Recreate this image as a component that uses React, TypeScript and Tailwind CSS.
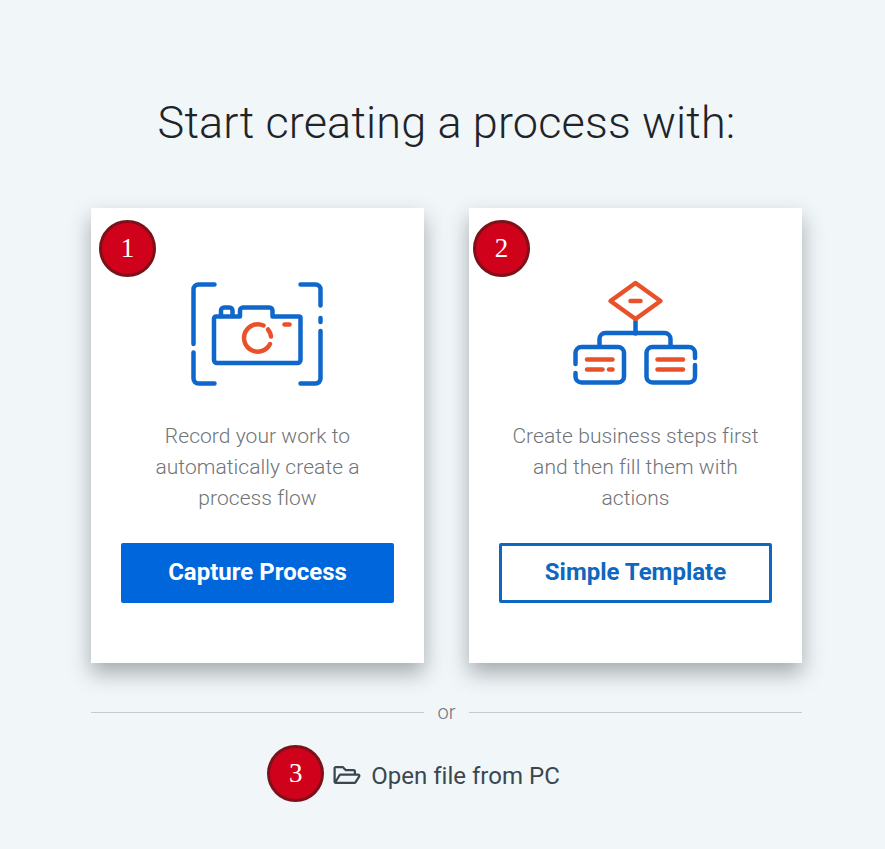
import { FaRegFolderOpen } from 'react-icons/fa';

function Badge({ n, className }: { n: number; className: string }) {
  return (
    <div
      className={`absolute w-[57px] h-[57px] rounded-full bg-[#d0021b] border-[3px] border-[#7d1018] flex items-center justify-center text-white text-[27px] font-['Liberation_Serif',serif] ${className}`}
    >
      {n}
    </div>
  );
}

function CameraIcon() {
  return (
    <svg width="140" height="110" viewBox="188 279 140 110" fill="none" strokeWidth="4.5" strokeLinecap="round" strokeLinejoin="round">
      <g stroke="#0f67cc">
        <path d="M214.500 284.500H198.500a5 5 0 0 0-5 5V344" />
        <path d="M193.500 352.500V378.500a5 5 0 0 0 5 5H214.500" />
        <path d="M300.500 284.500H315.500a5 5 0 0 1 5 5V305.500" />
        <path d="M320.500 318V322" />
        <path d="M320.500 331V378.500a5 5 0 0 1-5 5H300.500" />
        {/* body top is open under the big hump */}
        <path d="M240 316.500V310.500a3 3 0 0 1 3-3H269.500a3 3 0 0 1 3 3V316.500H299a1.500 1.500 0 0 1 1.500 1.500V360a3 3 0 0 1-3 3H217a3 3 0 0 1-3-3V318.500a2 2 0 0 1 2-2H240" />
        <path d="M221 316V310.500a3 3 0 0 1 3-3H229.500a3 3 0 0 1 3 3V316" />
      </g>
      <g stroke="#e8512a">
        <path d="M263.500 325.500A13.700 13.700 0 1 0 270 344" />
        <path d="M268 329.500A13.500 13.500 0 0 1 271 336.500" />
        <path d="M284.500 324.500H289.500" />
      </g>
    </svg>
  );
}

function DiagramIcon() {
  return (
    <svg width="130" height="110" viewBox="571 279 130 110" fill="none" strokeWidth="4.5" strokeLinecap="round" strokeLinejoin="round">
      <g stroke="#0f67cc">
        <path d="M635.500 321V333.500" />
        <path d="M599.500 346V339a6 6 0 0 1 6-6H664.500a6 6 0 0 1 6 6V346" />
        <path d="M575.500 364V353a6 6 0 0 1 6-6H618a6 6 0 0 1 6 6V376.500a6 6 0 0 1-6 6H581.500a6 6 0 0 1-6-6V373" />
        <path d="M695 358V353a6 6 0 0 0-6-6H652.500a6 6 0 0 0-6 6V376.500a6 6 0 0 0 6 6H689a6 6 0 0 0 6-6V365" />
      </g>
      <g stroke="#e8512a">
        <path d="M635.500 283L660.500 301L635.500 319L610.500 301Z" />
        <path d="M630.500 301H640.500" />
        <path d="M587 359.500H612.500" />
        <path d="M587 369.500H602.500" />
        <path d="M609 369.500H612.500" />
        <path d="M657.500 359.500H683" />
        <path d="M657.500 369.500H683" />
      </g>
    </svg>
  );
}

function Card({ icon, lines, children }: { icon: React.ReactNode; lines: string[]; children: React.ReactNode }) {
  return (
    <div className="w-[333px] h-[455px] bg-white shadow-[0_10px_20px_rgba(40,48,50,0.38)] flex flex-col items-center pt-[71px] px-[30px]">
      <div className="h-[110px]">{icon}</div>
      <p className="mt-[32px] text-[21px] tracking-[0.06px] leading-[31px] font-light text-[#6f7479] text-center">
        {lines.map((line) => (
          <span key={line} className="block">{line}</span>
        ))}
      </p>
      {children}
    </div>
  );
}

export default function App() {
  return (
    <div className="w-[885px] h-[849px] bg-[#f1f6f9] font-['Roboto',sans-serif] overflow-hidden">
      <div className="w-[711px] ml-[91px]">
        <h1 className="pt-[92px] text-center text-[45px] tracking-[0.15px] leading-[62px] font-light text-[#1f2429]">
          Start creating a process with:
        </h1>

        <div className="relative mt-[54px] flex gap-[45px]">
          <Card icon={<CameraIcon />} lines={['Record your work to', 'automatically create a', 'process flow']}>
            <button className="mt-[29px] w-[273px] h-[60px] pb-[2px] rounded-[2px] bg-[#0066dc] text-white text-[24px] font-bold">
              Capture Process
            </button>
          </Card>
          <Card icon={<DiagramIcon />} lines={['Create business steps first', 'and then fill them with', 'actions']}>
            <button className="mt-[29px] w-[273px] h-[60px] pb-[2px] rounded-[2px] bg-white border-[3px] border-[#0f67c0] text-[#0f67c0] text-[24px] font-bold">
              Simple Template
            </button>
          </Card>
          <Badge n={1} className="left-[8px] top-[12px]" />
          <Badge n={2} className="left-[382px] top-[12px]" />
        </div>

        <div className="mt-[38px] flex items-center h-[22px]">
          <div className="w-[333px] h-px bg-[#c5cbd0]" />
          <span className="w-[45px] text-center text-[20px] font-light text-[#6f7479]">or</span>
          <div className="w-[333px] h-px bg-[#c5cbd0]" />
        </div>

        <div className="relative mt-[22px] w-fit mx-auto flex items-center gap-[10px] h-[58px] text-[24px] tracking-[0.02px] text-[#3b4750]">
          <FaRegFolderOpen className="w-[28px] h-[24px] mt-[2px]" />
          <span className="mt-[4px]">Open file from PC</span>
          <Badge n={3} className="left-[-66px] top-0" />
        </div>
      </div>
    </div>
  );
}
